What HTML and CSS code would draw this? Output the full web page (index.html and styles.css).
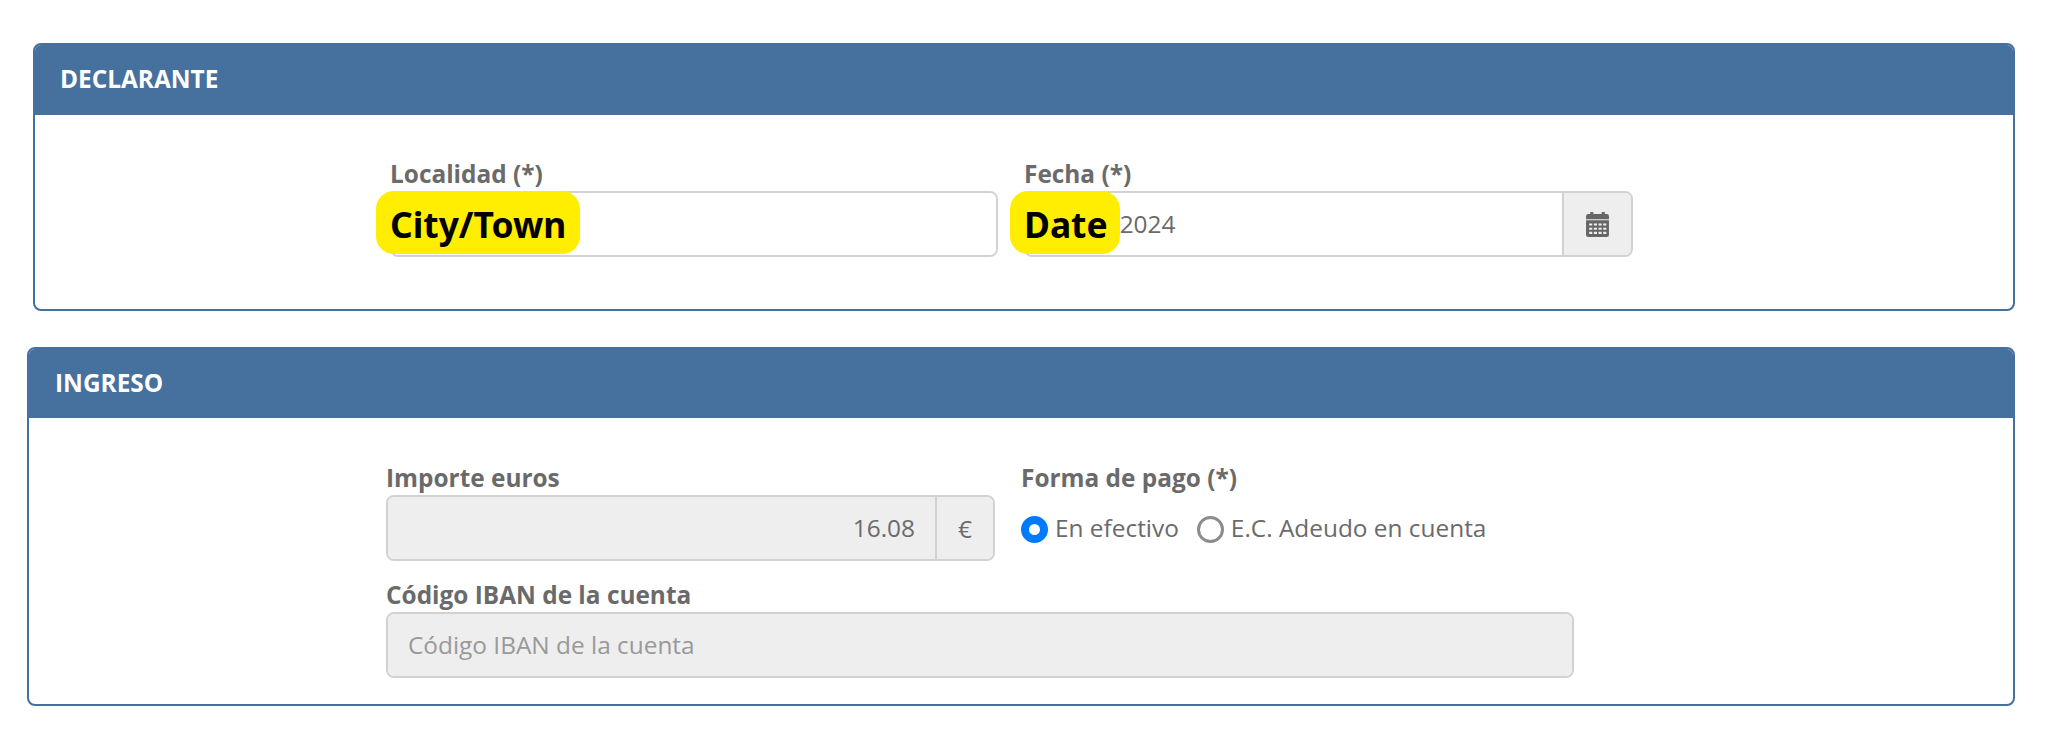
FILE: index.html
```html
<!DOCTYPE html>
<html lang="es">
<head>
<meta charset="utf-8">
<title>Declarante</title>
<link rel="stylesheet" href="styles.css">
</head>
<body>
<section class="panel panel-declarante">
  <h2 class="panel-head">DECLARANTE</h2>
  <div class="form form-declarante">
    <div class="field">
      <div class="label">Localidad (*)</div>
      <div class="control"><div class="input"></div></div>
      <span class="note">City/Town</span>
    </div>
    <div class="field">
      <div class="label">Fecha (*)</div>
      <div class="control">
        <div class="input">01/01/2024</div>
        <div class="addon addon-cal">
          <svg class="cal" viewBox="0 0 22 24" width="23" height="25" aria-hidden="true">
            <path fill="#666" fill-rule="evenodd" d="M4 0h3v2h8V0h3v2h2a2 2 0 0 1 2 2v3H0V4a2 2 0 0 1 2-2h2zM0 8h22v14a2 2 0 0 1-2 2H2a2 2 0 0 1-2-2zM3 11v2h3v-2zM7.500 11v2h3v-2zM12 11v2h3v-2zM16.500 11v2h3v-2zM3 15v2h3v-2zM7.500 15v2h3v-2zM12 15v2h3v-2zM16.500 15v2h3v-2zM3 19v2h3v-2zM7.500 19v2h3v-2zM12 19v2h3v-2zM16.500 19v2h3v-2z"/>
          </svg>
        </div>
      </div>
      <span class="note note-date">Date</span>
    </div>
  </div>
</section>
<section class="panel panel-ingreso">
  <h2 class="panel-head">INGRESO</h2>
  <div class="form form-ingreso">
    <div class="field">
      <div class="label">Importe euros</div>
      <div class="control">
        <div class="input input-off input-num">16.08</div>
        <div class="addon addon-eur">€</div>
      </div>
    </div>
    <div class="field">
      <div class="label">Forma de pago (*)</div>
      <div class="radios">
        <span class="radio radio-on"></span><span class="radio-text">En efectivo</span>
        <span class="radio radio-off"></span><span class="radio-text">E.C. Adeudo en cuenta</span>
      </div>
    </div>
    <div class="field field-wide">
      <div class="label">Código IBAN de la cuenta</div>
      <div class="control"><div class="input input-off input-ph">Código IBAN de la cuenta</div></div>
    </div>
  </div>
</section>
</body>
</html>
```

FILE: styles.css
```css
* { box-sizing: border-box; }
html, body { margin: 0; padding: 0; background: #fff; }
body {
  height: 731px;
  overflow: hidden;
  padding-top: 43px;
  font-family: "Open Sans", "Noto Sans", sans-serif;
  color: #6a6a6a;
}
.panel {
  border: 2px solid #46709d;
  border-radius: 8px;
  overflow: hidden;
  background: #fff;
}
.panel-declarante { margin-left: 33px; width: 1982px; height: 268px; }
.panel-ingreso { margin: 36px 0 0 27px; width: 1988px; height: 359px; }
.panel-head {
  margin: 0;
  height: 69px;
  padding-left: 25px;
  background: #46709d;
  color: #fff;
  font-size: 24.4px;
  font-weight: 700;
  line-height: 68px;
}
.panel-declarante .panel-head { height: 70px; }
.panel-ingreso .panel-head { padding-left: 26px; }
.form { display: grid; }
.form-declarante {
  grid-template-columns: 608px 609px;
  column-gap: 26px;
  margin: 43px 0 0 355px;
}
.form-ingreso {
  grid-template-columns: 609px 553px;
  column-gap: 26px;
  row-gap: 18px;
  margin: 44px 0 0 357px;
}
.field { position: relative; }
.field-wide { grid-column: 1 / 3; }
.label {
  height: 33px;
  font-size: 24.4px;
  font-weight: 700;
  line-height: 31px;
}
.control {
  display: flex;
  height: 66px;
  border: 2px solid #d2d2d2;
  border-radius: 8px;
  overflow: hidden;
}
.input {
  flex: 1;
  padding: 0 20px;
  font-size: 24.4px;
  line-height: 62px;
  background: #fff;
}
.input-off { background: #eee; }
.input-num { text-align: right; }
.input-ph { color: #999; }
.addon {
  display: flex;
  align-items: center;
  justify-content: center;
  border-left: 2px solid #d2d2d2;
  background: #eee;
  font-size: 24.4px;
}
.addon-cal { width: 69px; }
.addon-eur { width: 58px; }
.radios {
  display: flex;
  align-items: center;
  height: 64px;
  font-size: 24.4px;
}
.radio {
  width: 27px;
  height: 27px;
  border-radius: 50%;
  margin-top: 4px;
}
.radio-on { border: 8px solid #007bff; background: #fff; }
.radio-off { border: 3px solid #8c8c8c; background: #fff; margin-left: 18px; }
.radio-text { margin-left: 7px; }
.note {
  position: absolute;
  top: 33px;
  left: -14px;
  height: 63px;
  padding: 0 14px;
  border-radius: 18px;
  background: #ffee00;
  color: #000;
  font-family: "Noto Sans", "Open Sans", sans-serif;
  font-size: 35.4px;
  font-weight: 700;
  line-height: 66px;
}
.note-date { padding-right: 12px; }
```
